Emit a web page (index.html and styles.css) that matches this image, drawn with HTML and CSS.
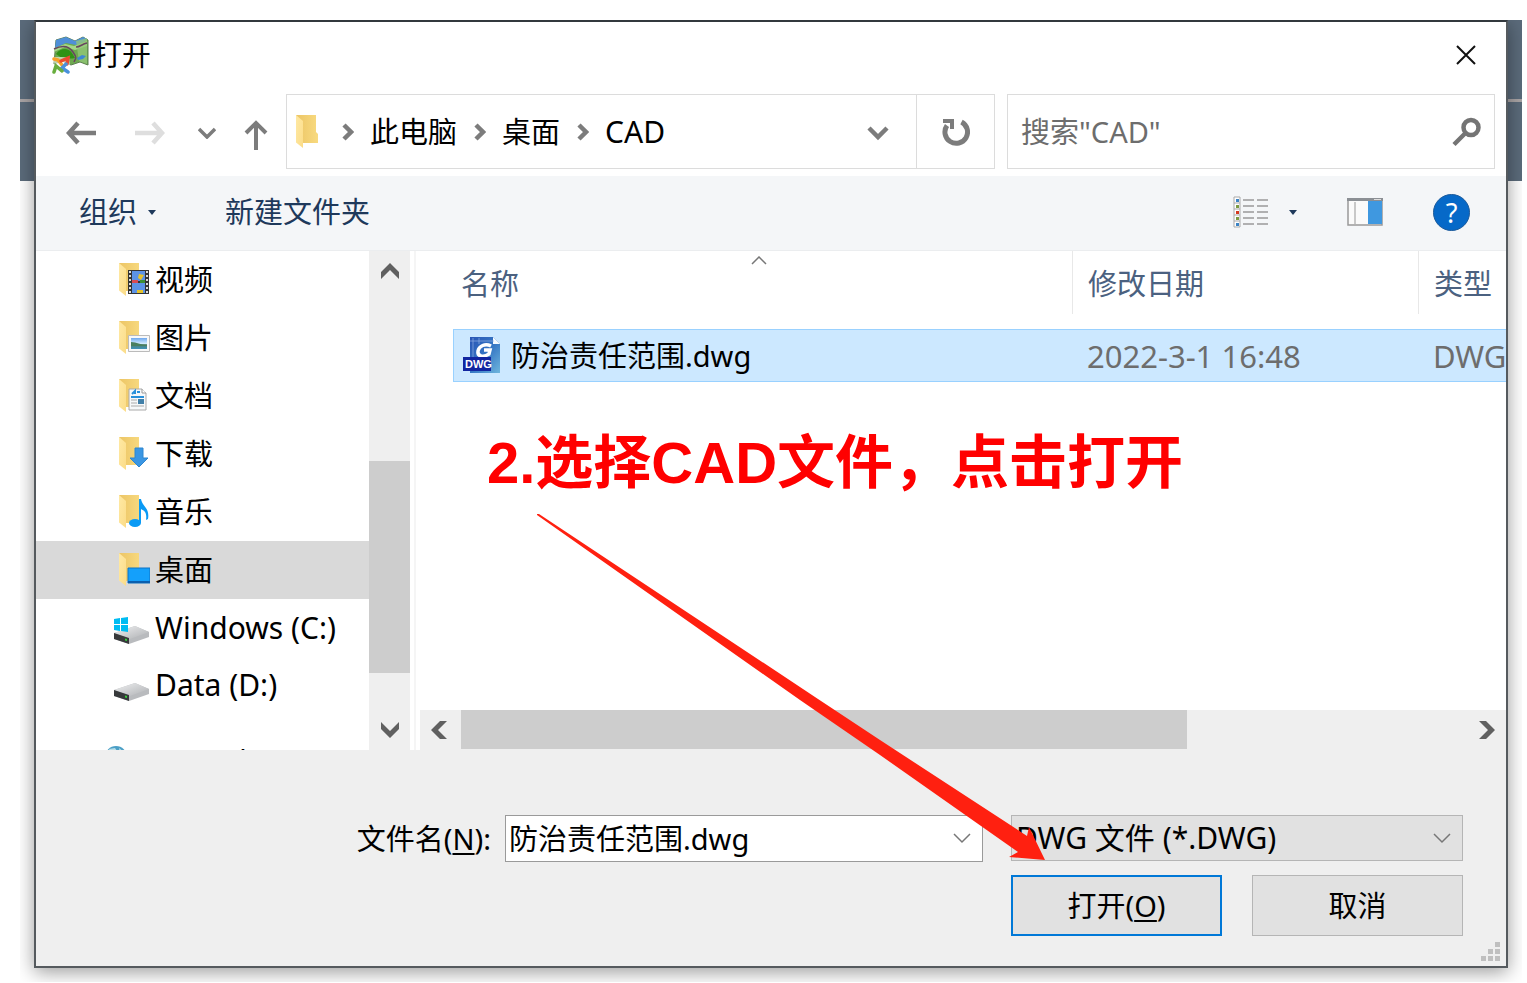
FILE: index.html
```html
<!DOCTYPE html>
<html lang="zh-CN">
<head>
<meta charset="utf-8">
<title>打开</title>
<link rel="stylesheet" href="styles.css">
</head>
<body>
<svg class="defs" aria-hidden="true">
  <defs>
    <linearGradient id="gBack" x1="0" y1="0" x2="1" y2="0"><stop offset="0" stop-color="#ecc565"/><stop offset="1" stop-color="#f8da80"/></linearGradient>
    <linearGradient id="gFront" x1="0" y1="0" x2="1" y2="1"><stop offset="0" stop-color="#ffe9a4"/><stop offset="1" stop-color="#fbdc88"/></linearGradient>
    <linearGradient id="gDisk" x1="0" y1="0" x2="1" y2="1"><stop offset="0" stop-color="#f0f1f2"/><stop offset="1" stop-color="#aeb0b3"/></linearGradient>
    <linearGradient id="gDwg" x1="0" y1="0" x2="1" y2="1"><stop offset="0" stop-color="#2a55b4"/><stop offset=".5" stop-color="#3576c4"/><stop offset="1" stop-color="#6fb6dd"/></linearGradient>
    <linearGradient id="gSky" x1="0" y1="0" x2="0" y2="1"><stop offset="0" stop-color="#6fa8ee"/><stop offset=".55" stop-color="#d9efff"/><stop offset=".6" stop-color="#4e7f6c"/><stop offset="1" stop-color="#3f93bd"/></linearGradient>
    <symbol id="folder" viewBox="0 0 24 34">
      <path d="M1 0h20v17l2 2v9H8z" fill="url(#gBack)"/>
      <path d="M1 0l7 6v27L1 27.500z" fill="url(#gFront)"/>
    </symbol>
    <symbol id="disk" viewBox="0 0 37 20">
      <path d="M1 9L22 2l14 6v5L16 20 1 15z" fill="#b9bbbe"/>
      <path d="M1 9L22 2l14 6-19 7z" fill="url(#gDisk)"/>
      <path d="M1 9l15 5v6L1 15z" fill="#37393b"/>
      <path d="M12 14.500l2 .6v2l-2-.6z" fill="#35d03a"/>
    </symbol>
  </defs>
</svg>
<main class="stage">
  <section class="dialog" role="dialog" aria-labelledby="title">
    <header class="titlebar">
      <svg class="app-icon" viewBox="0 0 38 38" aria-hidden="true">
        <path d="M5 4l10-3 9 4 8-4 5 3v25l-8-3-9 3-9-4-8 3z" fill="#6da94f" stroke="#5d7f50"/>
        <path d="M5 4l10-3 9 4 8-4 4 2-3 3-8 3-10-2-11 5z" fill="#4f8fd8"/>
        <path d="M4 12l10-4 9 2 13-5v5l-12 4-10-3-11 5z" fill="#a5d888"/>
        <path d="M25 5l11-3v26l-8-3z" fill="#94c878" opacity=".75"/>
        <path d="M5 18c4-6 12-7 16-1l3 5c-5 1-13 1-19-4z" fill="#2f9215"/>
        <path d="M3 13c8-4 15-3 19 3s3 6 1 10M25 11c4 0 6-3 11-4" fill="none" stroke="#68465f" stroke-width="1.500"/>
        <path d="M26 22l5-3 4 1-3 3-5 1z" fill="#3d87d4"/>
        <path d="M1 21h17l1 8-4 8H2l2-8z" fill="#fff" opacity=".55"/>
        <g fill="none" stroke-width="3.500" stroke-linecap="round">
          <path d="M3 23l4 1 4 5" stroke="#f6a12c"/>
          <path d="M10 25l7-3-1 6" stroke="#ec4b31"/>
          <path d="M15 28l-4 4 6 4" stroke="#4a91dc"/>
          <path d="M3 36l2-6 6 5" stroke="#68ae3e"/>
        </g>
      </svg>
      <h1 class="title" id="title">打开</h1>
      <button class="close" type="button" aria-label="关闭">
        <svg width="20" height="20" viewBox="0 0 20 20"><path d="M1 1l18 18M19 1L1 19" stroke="#111" stroke-width="2" fill="none"/></svg>
      </button>
    </header>

    <nav class="navrow" aria-label="导航">
      <div class="history">
        <button type="button" aria-label="后退"><svg width="30" height="24" viewBox="0 0 30 24"><path d="M12 2L3 12l9 10M3 12h27" fill="none" stroke="#7c7c7c" stroke-width="4.500"/></svg></button>
        <button type="button" aria-label="前进" disabled><svg width="30" height="24" viewBox="0 0 30 24"><path d="M18 2l9 10-9 10M27 12H0" fill="none" stroke="#dedede" stroke-width="4.500"/></svg></button>
        <button type="button" aria-label="最近位置"><svg width="18" height="12" viewBox="0 0 18 12"><path d="M1 2l8 8 8-8" fill="none" stroke="#7c7c7c" stroke-width="3.500"/></svg></button>
        <button type="button" aria-label="上移" class="up"><svg width="24" height="30" viewBox="0 0 24 30"><path d="M2 13L12 3l10 10M12 3v27" fill="none" stroke="#7c7c7c" stroke-width="4"/></svg></button>
      </div>
      <div class="address">
        <div class="crumbs">
          <svg class="crumb-folder" width="24" height="34" aria-hidden="true"><use href="#folder"/></svg>
          <svg class="sep" width="12" height="18" viewBox="0 0 12 18"><path d="M2 2l7 7-7 7" fill="none" stroke="#7c7c7c" stroke-width="4.500"/></svg>
          <a href="#">此电脑</a>
          <svg class="sep" width="12" height="18" viewBox="0 0 12 18"><path d="M2 2l7 7-7 7" fill="none" stroke="#7c7c7c" stroke-width="4.500"/></svg>
          <a href="#">桌面</a>
          <svg class="sep" width="12" height="18" viewBox="0 0 12 18"><path d="M2 2l7 7-7 7" fill="none" stroke="#7c7c7c" stroke-width="4.500"/></svg>
          <a class="latin" href="#">CAD</a>
        </div>
        <button class="drop" type="button" aria-label="以前的位置"><svg width="24" height="16" viewBox="0 0 24 16"><path d="M3 3l9 9 9-9" fill="none" stroke="#7c7c7c" stroke-width="4.500"/></svg></button>
        <button class="refresh" type="button" aria-label="刷新"><svg width="28" height="28" viewBox="0 0 28 28"><path d="M19.500 4A11.300 11.300 0 1 1 5 7.500" fill="none" stroke="#7c7c7c" stroke-width="5"/><path d="M1 1h11v10H8V5H1z" fill="#7c7c7c"/></svg></button>
      </div>
      <div class="search">
        <input type="text" aria-label="搜索" placeholder="搜索&quot;CAD&quot;">
        <svg width="30" height="30" viewBox="0 0 30 30" aria-hidden="true"><circle cx="20" cy="10.500" r="7.500" fill="none" stroke="#747474" stroke-width="4.500"/><path d="M15 15.500L3 27.500" stroke="#747474" stroke-width="4.500"/></svg>
      </div>
    </nav>

    <div class="toolbar">
      <button class="tool organize" type="button">组织<svg width="8" height="5" viewBox="0 0 8 5"><path d="M0 0h8L4 5z" fill="#1e395b"/></svg></button>
      <button class="tool" type="button">新建文件夹</button>
      <button class="tool view" type="button" aria-label="更改视图">
        <svg width="36" height="32" viewBox="0 0 36 32">
          <path d="M1 1h6v30H1z" fill="#fff" stroke="#a9a9a9"/>
          <path d="M1 7h6M1 13h6M1 19h6M1 25h6" stroke="#a9a9a9"/>
          <path d="M3 3h3v3H3zM3 27h3v3H3z" fill="#3b83c4"/><path d="M3 9h3v3H3zM3 21h3v3H3z" fill="#7c9b42"/><path d="M3 15h3v3H3z" fill="#d53a20"/>
          <path d="M10 4h11M24 4h11M10 10h11M24 10h11M10 16h11M24 16h11M10 22h11M24 22h11M10 28h11M24 28h11" stroke="#999" stroke-width="1.500"/>
        </svg>
        <svg width="8" height="5" viewBox="0 0 8 5"><path d="M0 0h8L4 5z" fill="#1e395b"/></svg>
      </button>
      <button class="tool preview" type="button" aria-label="预览窗格">
        <svg width="36" height="28" viewBox="0 0 36 28"><path d="M1 1h34v26H1z" fill="#fafafa" stroke="#999" stroke-width="1.500"/><path d="M0 0h36v3H0z" fill="#8b8f94"/><path d="M27 1h7v1h-7z" fill="#ddd"/><path d="M8 4v22" stroke="#c8c8c8" stroke-width="2"/><path d="M21 3h14v23H21z" fill="#3f98e0"/></svg>
      </button>
      <button class="tool help" type="button" aria-label="帮助"><span>?</span></button>
    </div>

    <div class="browser">
      <ul class="tree">
        <li><a href="#"><svg width="37" height="34" viewBox="0 0 37 34"><use href="#folder" x="5" width="24" height="34"/><path d="M15 7h21v24H15z" fill="#333"/><path d="M19 8h13v10H19zM19 20h13v10H19z" fill="#5c93e6"/><path d="M17 8v22M34 8v22" stroke="#ddd" stroke-width="2" stroke-dasharray="2 2"/><path d="M26 11l5 1-3 5-3-2z" fill="#e6c32c"/><path d="M19 17h6v3h-6z" fill="#d84b55"/><path d="M27 17h5v3h-5z" fill="#3c8f36"/><path d="M24 27h6v3h-6z" fill="#e6c32c"/></svg>视频</a></li>
        <li><a href="#"><svg width="37" height="34" viewBox="0 0 37 34"><use href="#folder" x="5" width="24" height="34"/><path d="M15.500 14.500h21v16h-21z" fill="#f8f8f8" stroke="#bbb"/><path d="M18 17h16v11H18z" fill="url(#gSky)"/><path d="M18 21c6 0 9 3 16 3v1H18z" fill="#4a7f5e"/></svg>图片</a></li>
        <li><a href="#"><svg width="37" height="34" viewBox="0 0 37 34"><use href="#folder" x="5" width="24" height="34"/><path d="M16 10h13l4 4v17H16z" fill="#f6f8fa" stroke="#aaa"/><path d="M29 10v4h4" fill="#fff" stroke="#999"/><path d="M19 15l3-3v3M24 13h3M18 18h13" fill="none" stroke="#2990da" stroke-width="2"/><path d="M18 21h6M18 24h6M18 27h13" stroke="#aaa"/><path d="M25 20h6v5h-6z" fill="#407fa8"/></svg>文档</a></li>
        <li><a href="#"><svg width="37" height="34" viewBox="0 0 37 34"><use href="#folder" x="5" width="24" height="34"/><path d="M22 11h8v10h5L26 30l-9-9h5z" fill="#3a96e3" stroke="#2d86d0"/></svg>下载</a></li>
        <li><a href="#"><svg width="37" height="34" viewBox="0 0 37 34"><use href="#folder" x="5" width="24" height="34"/><ellipse cx="22" cy="28" rx="6" ry="4" fill="#0a9af5"/><path d="M26 4h2c1 7 9 9 7 20l-2 1c1-7-1-9-5-11v14h-2z" fill="#0a9af5"/></svg>音乐</a></li>
        <li class="current"><a href="#"><svg width="37" height="34" viewBox="0 0 37 34"><use href="#folder" x="5" width="24" height="34"/><path d="M15 15h22v15H15z" fill="#14a0fb" stroke="#0c72c4"/><path d="M15 29h22" stroke="#0b5fae" stroke-width="2"/></svg>桌面</a></li>
        <li class="drive"><a href="#"><svg width="37" height="34" viewBox="0 0 37 34"><use href="#disk" y="13" width="37" height="20"/><path d="M1 8l6-1v6H1zM8 7l7-1v7H8zM1 14h6v6l-6-1zM8 14h7v7l-7-1z" fill="#00bcf2"/></svg>Windows (C:)</a></li>
        <li class="drive"><a href="#"><svg width="37" height="34" viewBox="0 0 37 34"><use href="#disk" y="13" width="37" height="20"/></svg>Data (D:)</a></li>
        <li class="network"><a href="#"><svg width="24" height="34" viewBox="0 0 24 34"><circle cx="11" cy="14" r="11" fill="#4b9fc6"/><path d="M4 6l6-1 2 3-5 4zM14 5l5 4-4 2z" fill="#b8dfe9"/></svg>Network</a></li>
      </ul>
      <div class="vscroll" aria-hidden="true">
        <svg width="18" height="16" viewBox="0 0 18 16"><path d="M0 9l9-9 9 9v7L9 7l-9 9z" fill="#606060"/></svg>
        <div class="vtrack"><div class="vthumb"></div></div>
        <svg width="18" height="16" viewBox="0 0 18 16"><path d="M0 0l9 9 9-9v7l-9 9-9-9z" fill="#606060"/></svg>
      </div>
      <div class="pane">
        <div class="files">
          <table>
            <colgroup><col><col class="col-date"><col class="col-type"></colgroup>
            <thead><tr>
              <th scope="col"><span class="th-name">名称</span><svg class="sort" width="16" height="9" viewBox="0 0 16 9" aria-hidden="true"><path d="M1 8l7-7 7 7" fill="none" stroke="#777" stroke-width="1.500"/></svg></th>
              <th scope="col"><span class="th-line">修改日期</span></th>
              <th scope="col"><span class="th-line">类型</span></th>
            </tr></thead>
            <tbody><tr>
              <td><span class="file"><svg width="38" height="37" viewBox="0 0 38 37" aria-hidden="true"><path d="M7 0h23l7 7v29H7z" fill="url(#gDwg)"/><path d="M30 0l7 7h-7z" fill="#f5faff"/><path d="M7 4h24M10 1v20M16 1v6" stroke="#8fb0e4" stroke-width=".7"/><path d="M28 9c-6-3-12 0-13 5s5 7 11 3l1-4h-6" fill="none" stroke="#fff" stroke-width="3.500"/><path d="M0 20h28v14H0z" fill="#1226a0"/><text class="badge" x="2" y="31">DWG</text></svg>防治责任范围.dwg</span></td>
              <td class="dim">2022-3-1 16:48</td>
              <td class="dim">DWG</td>
            </tr></tbody>
          </table>
        </div>
        <div class="hscroll" aria-hidden="true">
          <svg width="16" height="18" viewBox="0 0 16 18"><path d="M9 0L0 9l9 9h7L7 9l9-9z" fill="#606060"/></svg>
          <div class="htrack"><div class="hthumb"></div></div>
          <svg width="16" height="18" viewBox="0 0 16 18"><path d="M7 0l9 9-9 9H0l9-9-9-9z" fill="#606060"/></svg>
        </div>
      </div>
    </div>

    <form class="footer">
      <label class="name-label" for="fname">文件名(<u>N</u>):</label>
      <div class="combo">
        <input id="fname" type="text" value="防治责任范围.dwg">
        <button type="button" aria-label="展开"><svg width="18" height="11" viewBox="0 0 18 11"><path d="M1 1l8 8 8-8" fill="none" stroke="#777" stroke-width="1.500"/></svg></button>
      </div>
      <div class="choices">
        <div class="type">
          <select aria-label="文件类型"><option>DWG 文件 (*.DWG)</option></select>
          <svg width="18" height="11" viewBox="0 0 18 11" aria-hidden="true"><path d="M1 1l8 8 8-8" fill="none" stroke="#777" stroke-width="1.500"/></svg>
        </div>
        <div class="actions">
          <button class="btn primary" type="button">打开(<u>O</u>)</button>
          <button class="btn" type="button">取消</button>
        </div>
      </div>
    </form>
    <svg class="grip" width="20" height="20" viewBox="0 0 20 20" aria-hidden="true"><path d="M14 0h5v5h-5zM7 7h5v5H7zM14 7h5v5h-5zM0 14h5v5H0zM7 14h5v5H7zM14 14h5v5h-5z" fill="#bfbfbf"/></svg>

    <p class="note">2.选择CAD文件，点击打开</p>
    <svg class="arrow" width="509" height="347" viewBox="0 0 509 347" aria-hidden="true"><path d="M0 0L2 0 281 185 343 226 490 322 492 313 508 346 472 343 481 338 343 241 263 186 0 1z" fill="#ff2010"/></svg>
  </section>
</main>
</body>
</html>
```

FILE: styles.css
```css
* { box-sizing: border-box; }

body {
  margin: 0;
  background: #fff;
  color: #000;
  font-family: "Noto Sans", "Noto Sans CJK SC", sans-serif;
  font-size: 29px;
  line-height: 44px;
}

button, input, select { font: inherit; color: inherit; }
button { border: 0; padding: 0; background: none; }
a { color: inherit; text-decoration: none; }
svg { display: block; flex: none; }
.defs { position: absolute; width: 0; height: 0; }
.latin { font-size: 30px; }

.stage {
  display: flex;
  min-height: calc(100vh - 22px);
  margin: 20px 5px 2px 20px;
  padding: 0 14px 14px;
  overflow: hidden;
  background: linear-gradient(#5b6b7b 0 79px, #aaa5a6 79px 82px, #5b6b7b 82px 161px, #fff 161px);
}

.dialog {
  position: relative;
  display: flex;
  flex: 1;
  flex-direction: column;
  min-width: 0;
  border: 2px solid #555a5e;
  border-top-color: #33393e;
  background: #efefef;
  box-shadow: 0 4px 18px rgba(0, 0, 0, .4);
}

.titlebar {
  display: flex;
  align-items: center;
  height: 66px;
  padding: 0 30px 0 15px;
  background: #fff;
}
.app-icon { width: 38px; height: 38px; }
.title { flex: 1; margin: 0 0 0 4px; font-size: 29px; font-weight: 400; }

.navrow {
  display: grid;
  grid-template-columns: 250px 709fr 500fr;
  height: 88px;
  padding: 6px 11px 7px 0;
  background: #fff;
}
.history { display: grid; grid-template-columns: 70px 68px 46px 52px; padding-left: 10px; }
.history button { display: grid; place-items: center; padding-top: 2px; }
.history .up { padding-top: 6px; }
.address { display: flex; border: 1px solid #dcdcdc; }
.crumbs { display: flex; flex: 1; align-items: center; gap: 17px; padding-left: 8px; white-space: nowrap; }
.crumb-folder { margin-right: 6px; }
.sep { margin-right: -1px; }
.drop { display: grid; place-items: center; width: 76px; padding-top: 3px; }
.refresh { display: grid; place-items: center; width: 78px; border-left: 1px solid #dcdcdc; }
.search { display: flex; align-items: center; margin-left: 12px; padding: 0 13px; border: 1px solid #dcdcdc; }
.search input { flex: 1; min-width: 0; padding: 0; border: 0; outline: 0; background: none; }
.search input::placeholder { color: #6d6d6d; opacity: 1; }

.toolbar {
  display: flex;
  align-items: center;
  height: 75px;
  padding: 0 36px 2px 43px;
  border-bottom: 1px solid #ebedef;
  background: #f4f6f8;
  color: #1e395b;
}
.tool { display: flex; align-items: center; }
.organize { gap: 11px; margin-right: 69px; }
.view { gap: 20px; margin-left: auto; }
.preview { margin: 0 50px; }
.help span {
  width: 37px;
  height: 37px;
  border: 1px solid #1b5a9b;
  border-radius: 50%;
  background: #0669c8;
  color: #fff;
  font-size: 27px;
  line-height: 35px;
  text-align: center;
}

.browser { display: flex; flex: 1; min-height: 0; background: #fff; }
.tree { flex: none; width: 333px; height: 499px; margin: 0; padding: 0; overflow: hidden; list-style: none; white-space: nowrap; }
.tree a { display: flex; align-items: center; gap: 5px; height: 58px; padding-left: 77px; }
.tree .current { background: #d9d9d9; }
.tree .drive a { height: 57px; font-size: 30px; }
.tree .network { padding-top: 18px; }
.tree .network a { gap: 9px; padding-left: 69px; }

.vscroll { display: flex; flex-direction: column; align-items: center; width: 41px; padding: 12px 0; background: #efefef; }
.vtrack { display: flex; flex: 1; flex-direction: column; align-self: stretch; padding: 182px 0 49px; }
.vthumb { flex: 1; background: #cdcdcd; }

.pane { display: flex; flex: 1; flex-direction: column; min-width: 0; margin-left: 4px; border-left: 2px solid #f5f5f5; }
.files { flex: 1; padding-left: 37px; overflow: hidden; }
table { width: 100%; table-layout: fixed; border-spacing: 0; white-space: nowrap; }
.col-date { width: 346px; }
.col-type { width: 88px; }
th { position: relative; height: 78px; padding: 0 0 15px; color: #4b6180; font-weight: 400; text-align: left; }
.th-name, .th-line { display: block; padding: 11px 0 8px 15px; border-left: 1px solid #e8e8e8; }
.th-name { padding-left: 7px; border-color: transparent; }
.sort { position: absolute; top: 5px; left: calc(50% - 12px); }
td { height: 53px; padding: 0 0 0 15px; overflow: hidden; border: solid #99d1ff; border-width: 1px 0; background: #cce8ff; }
td:first-child { padding-left: 9px; border-left-width: 1px; }
.file { display: flex; align-items: center; gap: 10px; }
.badge { fill: #fff; font: bold 11px "Liberation Sans", sans-serif; }
.dim { color: #6d6d6d; font-size: 31px; }

.hscroll { display: flex; align-items: center; height: 40px; margin-left: 4px; padding: 0 11px; background: #efefef; }
.htrack { flex: 1; align-self: stretch; padding-left: 14px; }
.hthumb { width: 71.3%; height: 39px; background: #cdcdcd; }

.footer {
  display: grid;
  grid-template-columns: 469fr 478fr 28fr 452fr;
  align-items: start;
  height: 216px;
  padding: 65px 43px 0 0;
}
.name-label { padding: 2px 14px 0 0; text-align: right; }
.combo { display: flex; height: 47px; border: 1px solid #9a9a9a; background: #fff; }
.combo input { flex: 1; min-width: 0; padding: 1px 0 0 3px; border: 0; outline: 0; background: none; }
.combo button { display: grid; place-items: center; width: 40px; }
.choices { grid-column: 4; }
.type { position: relative; }
.type select {
  display: block;
  width: 100%;
  height: 46px;
  padding: 0 40px 0 4px;
  border: 1px solid #b5b5b5;
  border-radius: 0;
  background: #e1e1e1;
  font-size: 30px;
  appearance: none;
}
.type svg { position: absolute; top: 18px; right: 12px; pointer-events: none; }
.actions { display: grid; grid-template-columns: 1fr 1fr; gap: 30px; margin-top: 14px; }
.btn { height: 61px; border: 1px solid #b5b5b5; background: #e1e1e1; }
.primary { border: 2px solid #0078d7; }
u { text-decoration-thickness: 2px; text-underline-offset: 3px; }

.grip { position: absolute; right: 5px; bottom: 4px; }

.note {
  position: absolute;
  top: 401px;
  left: 451px;
  margin: 0;
  color: #f00;
  font: bold 58px/80px "Liberation Sans", "Noto Sans CJK SC", sans-serif;
  white-space: nowrap;
}
.arrow { position: absolute; top: 492px; left: 501px; pointer-events: none; }
```
